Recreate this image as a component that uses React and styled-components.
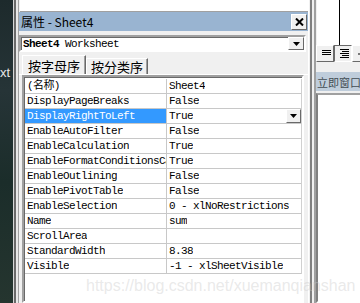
import React from 'react';
import styled, { createGlobalStyle } from 'styled-components';

const GlobalStyle = createGlobalStyle`
  html, body {
    margin: 0;
    padding: 0;
    width: 360px;
    height: 303px;
    overflow: hidden;
    background: #f0f0f0;
  }
  #root {
    width: 360px;
    height: 303px;
  }
`;

const MONO = `"Liberation Mono", "Noto Sans CJK SC", monospace`;
const UI = `"Noto Sans CJK SC", "Noto Sans", sans-serif`;

const Screen = styled.div`
  position: relative;
  display: flex;
  width: 360px;
  height: 303px;
  overflow: hidden;
  background: #f0f0f0;
`;

const Desktop = styled.div`
  width: 13px;
  flex-shrink: 0;
  background: linear-gradient(180deg, #1d2a2c 0%, #263437 30%, #1b2d2a 60%, #25352f 100%);
  color: #e8e8e8;
  font-family: "Liberation Sans", sans-serif;
  font-size: 13px;
  padding-top: 65px;
  box-sizing: border-box;
  overflow: hidden;
  white-space: nowrap;
`;

const FrameEdge = styled.div`
  width: 6px;
  flex-shrink: 0;
  box-sizing: border-box;
  border-left: 1px solid #d8d8d8;
  border-right: 1px solid #a0a0a0;
  background: linear-gradient(90deg, #6a6a6a 0 2px, #e8e8e8 2px 4px, #f0f0f0 4px);
`;

const PropsPane = styled.div`
  width: 289px;
  flex-shrink: 0;
  display: flex;
  flex-direction: column;
`;

const TopWindow = styled.div`
  height: 11px;
  margin-left: 1px;
  background: #fff;
  border-bottom: 1px solid #a0a0a0;
`;

const TitleBar = styled.div`
  height: 19px;
  background: #99b4d1;
  display: flex;
  align-items: center;
  justify-content: space-between;
  padding-left: 2px;
  font-family: ${UI};
  font-size: 12px;
  color: #000;
`;

const CloseButton = styled.div`
  width: 16px;
  height: 16px;
  margin-right: 1px;
  box-sizing: border-box;
  background: #f0f0f0;
  border: 1px solid;
  border-color: #fff #696969 #696969 #fff;
  display: flex;
  align-items: center;
  justify-content: center;
`;

const Combo = styled.div`
  height: 17px;
  margin: 4px 2px 0 0;
  box-sizing: border-box;
  background: #fff;
  border: 2px solid;
  border-color: #a0a0a0 #fff #fff #a0a0a0;
  box-shadow: inset 1px 1px 0 #696969;
  display: flex;
  align-items: center;
  justify-content: space-between;
  padding-left: 2px;
  font-family: ${MONO};
  font-size: 11px;
  letter-spacing: -0.6px;
`;

const Bold = styled.b`
  font-weight: 700;
  margin-right: 6px;
`;

const DropButton = styled.div`
  width: 16px;
  height: 13px;
  box-sizing: border-box;
  background: #f0f0f0;
  border: 1px solid;
  border-color: #fff #696969 #696969 #fff;
  display: flex;
  align-items: center;
  justify-content: center;
`;

const TabStrip = styled.div`
  display: flex;
  align-items: flex-end;
  height: 19px;
  margin-top: 3px;
  padding-left: 3px;
  border-bottom: 1px solid #fff;
`;

const Tab = styled.div`
  height: ${p => (p.active ? 19 : 16)}px;
  padding: 0 ${p => (p.active ? 5 : 4)}px;
  box-sizing: border-box;
  display: flex;
  align-items: center;
  font-family: ${UI};
  font-size: 13px;
  color: #000;
  background: #f0f0f0;
  border: 1px solid;
  border-bottom: none;
  border-color: #fff #696969 #fff #fff;
  box-shadow: inset -1px 0 0 #a0a0a0;
`;

const GridFrame = styled.div`
  flex: 1;
  margin: 0 4px 0 3px;
  border: 2px solid;
  border-color: #a0a0a0 #fff #fff #a0a0a0;
  background: #fff;
  box-shadow: inset 1px 1px 0 #696969;
  padding: 2px 0 0 1px;
  overflow: hidden;
`;

const Grid = styled.div`
  display: grid;
  grid-template-columns: 142px 1fr;
  border-right: 1px solid #d0d0d0;
`;

const Cell = styled.div`
  height: 15px;
  box-sizing: border-box;
  border-bottom: 1px solid #c8c8c8;
  border-right: ${p => (p.name ? '1px solid #c8c8c8' : 'none')};
  background: ${p => (p.selected ? '#3399ff' : '#fff')};
  color: ${p => (p.selected ? '#fff' : '#000')};
  font-family: ${MONO};
  font-size: 11px;
  letter-spacing: -0.6px;
  line-height: 14px;
  padding-left: 2px;
  white-space: nowrap;
  overflow: hidden;
  display: flex;
  align-items: center;
  justify-content: space-between;
`;

const CellText = styled.span`
  overflow: hidden;
  min-width: 0;
`;

const CellDrop = styled.div`
  width: 15px;
  height: 14px;
  box-sizing: border-box;
  background: #f0f0f0;
  border: 1px solid;
  border-color: #fff #696969 #696969 #fff;
  display: flex;
  align-items: center;
  justify-content: center;
  flex-shrink: 0;
`;

const Splitter = styled.div`
  width: 8px;
  flex-shrink: 0;
  box-sizing: border-box;
  border-left: 1px solid #fff;
  border-right: 1px solid #a0a0a0;
  background: linear-gradient(90deg, #f0f0f0 0 1px, #808080 1px 3px, #f0f0f0 3px 5px, #a0a0a0 5px);
`;

const RightPane = styled.div`
  flex: 1;
  display: flex;
  flex-direction: column;
  min-width: 0;
`;

const CodeArea = styled.div`
  height: 45px;
  box-sizing: border-box;
  margin-left: 1px;
  background: #fff;
  display: flex;
`;

const CodeGutter = styled.div`
  width: 22px;
  border-right: 1px solid #000;
`;

const ToolRow = styled.div`
  display: flex;
  height: 17px;
`;

const ToolButton = styled.div`
  width: 18px;
  height: 17px;
  flex-shrink: 0;
  box-sizing: border-box;
  background: #f0f0f0;
  border: 1px solid;
  border-color: ${p => (p.pressed ? '#696969 #fff #fff #696969' : '#fff #696969 #696969 #fff')};
  display: flex;
  align-items: center;
  justify-content: center;
`;

const PaneTitle = styled.div`
  height: 19px;
  margin-top: 10px;
  background: #bfcddb;
  display: flex;
  align-items: center;
  padding-left: 1px;
  font-family: ${UI};
  font-size: 11px;
  color: #434e54;
  white-space: nowrap;
`;

const Immediate = styled.div`
  flex: 1;
  margin-top: 2px;
  background: #fff;
  border: 2px solid;
  border-right: none;
  border-color: #a0a0a0 #fff #fff #808080;
`;

const Watermark = styled.div`
  position: absolute;
  left: 86px;
  top: 277px;
  font-family: "Liberation Sans", Arial, sans-serif;
  font-size: 16px;
  color: rgba(200, 200, 200, 0.4);
  white-space: nowrap;
  pointer-events: none;
`;

const Triangle = () => (
  <svg width="7" height="4" viewBox="0 0 7 4">
    <path d="M0 0h7L3.5 4z" fill="#000" />
  </svg>
);

const LinesIcon = ({ rows }) => (
  <svg width="11" height="9" viewBox="0 0 11 9">
    {rows.map((w, i) => (
      <rect key={i} x={11 - w} y={i * 2 + (rows.length === 3 ? 1 : 0)} width={w} height="1" fill="#000" />
    ))}
  </svg>
);

const props = [
  ['(名称)', 'Sheet4'],
  ['DisplayPageBreaks', 'False'],
  ['DisplayRightToLeft', 'True', true],
  ['EnableAutoFilter', 'False'],
  ['EnableCalculation', 'True'],
  ['EnableFormatConditionsCalculation', 'True'],
  ['EnableOutlining', 'False'],
  ['EnablePivotTable', 'False'],
  ['EnableSelection', '0 - xlNoRestrictions'],
  ['Name', 'sum'],
  ['ScrollArea', ''],
  ['StandardWidth', '8.38'],
  ['Visible', '-1 - xlSheetVisible'],
];

export default function App() {
  return (
    <>
      <GlobalStyle />
      <Screen>
        <Desktop>xt</Desktop>
        <FrameEdge />
        <PropsPane>
          <TopWindow />
          <TitleBar>
            <span>属性 - Sheet4</span>
            <CloseButton>
              <svg width="9" height="8" viewBox="0 0 9 8">
                <path d="M1 0.5l7 7M8 0.5l-7 7" stroke="#000" strokeWidth="2" />
              </svg>
            </CloseButton>
          </TitleBar>
          <Combo>
            <span><Bold>Sheet4</Bold>Worksheet</span>
            <DropButton><Triangle /></DropButton>
          </Combo>
          <TabStrip>
            <Tab active>按字母序</Tab>
            <Tab>按分类序</Tab>
          </TabStrip>
          <GridFrame>
            <Grid>
              {props.map(([name, value, selected]) => (
                <React.Fragment key={name}>
                  <Cell name selected={selected}><CellText>{name}</CellText></Cell>
                  <Cell>
                    <CellText>{value}</CellText>
                    {selected && <CellDrop><Triangle /></CellDrop>}
                  </Cell>
                </React.Fragment>
              ))}
            </Grid>
          </GridFrame>
        </PropsPane>
        <Splitter />
        <RightPane>
          <CodeArea>
            <CodeGutter />
          </CodeArea>
          <ToolRow>
            <ToolButton><LinesIcon rows={[9, 9, 9]} /></ToolButton>
            <ToolButton pressed><LinesIcon rows={[9, 7, 9, 7, 9]} /></ToolButton>
            <ToolButton>
              <svg width="6" height="6" viewBox="0 0 6 6">
                <path d="M0 3h6" stroke="#000" />
              </svg>
            </ToolButton>
          </ToolRow>
          <PaneTitle>立即窗口</PaneTitle>
          <Immediate />
        </RightPane>
        <Watermark>https://blog.csdn.net/xuemanqianshan</Watermark>
      </Screen>
    </>
  );
}
